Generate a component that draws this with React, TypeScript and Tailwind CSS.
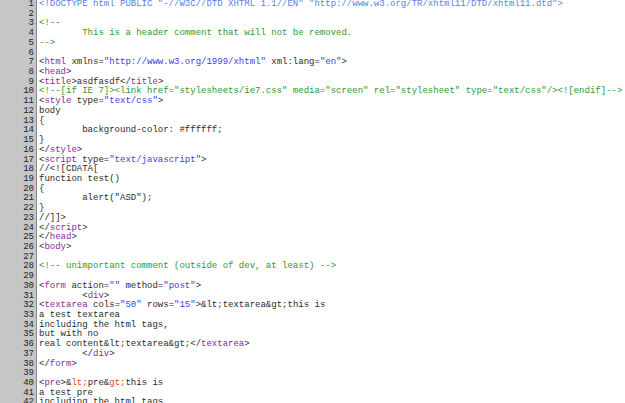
type Seg = [string, string];

const C: Record<string, string> = {
  p: "text-[#2b2b2b]",
  t: "text-[#8e1f99]",
  v: "text-[#3b3bf0]",
  c: "text-[#2e992e]",
  d: "text-[#5b7fe0]",
  e: "text-[#e6461d]",
};

const T = "        ";

const open = (name: string, rest: Seg[] = [], close = ">"): Seg[] => [
  ["p", "<"],
  ["t", name],
  ...rest,
  ["p", close],
];
const end = (name: string): Seg[] => [["p", "</"], ["t", name], ["p", ">"]];

const lines: Seg[][] = [
  [["d", '<!DOCTYPE html PUBLIC "-//W3C//DTD XHTML 1.1//EN" "http://www.w3.org/TR/xhtml11/DTD/xhtml11.dtd">']],
  [],
  [["c", "<!--"]],
  [["c", T + "This is a header comment that will not be removed."]],
  [["c", "-->"]],
  [],
  open("html", [
    ["p", " xmlns="],
    ["v", '"http://www.w3.org/1999/xhtml"'],
    ["p", " xml:lang="],
    ["v", '"en"'],
  ]),
  open("head"),
  [...open("title"), ["p", "asdfasdf"], ...end("title")],
  [["c", '<!--[if IE 7]><link href="stylesheets/ie7.css" media="screen" rel="stylesheet" type="text/css"/><![endif]-->']],
  open("style", [["p", " type="], ["v", '"text/css"']]),
  [["p", "body"]],
  [["p", "{"]],
  [["p", T + "background-color: #ffffff;"]],
  [["p", "}"]],
  end("style"),
  open("script", [["p", " type="], ["v", '"text/javascript"']]),
  [["p", "//<![CDATA["]],
  [["p", "function test()"]],
  [["p", "{"]],
  [["p", T + 'alert("ASD");']],
  [["p", "}"]],
  [["p", "//]]>"]],
  end("script"),
  end("head"),
  open("body"),
  [],
  [["c", "<!-- unimportant comment (outside of dev, at least) -->"]],
  [],
  open("form", [
    ["p", " action="],
    ["v", '""'],
    ["p", " method="],
    ["v", '"post"'],
  ]),
  [["p", T], ...open("div")],
  [
    ...open("textarea", [
      ["p", " cols="],
      ["v", '"50"'],
      ["p", " rows="],
      ["v", '"15"'],
    ]),
    ["p", "&lt;textarea&gt;this is"],
  ],
  [["p", "a test textarea"]],
  [["p", "including the html tags,"]],
  [["p", "but with no"]],
  [["p", "real content&lt;textarea&gt;"], ...end("textarea")],
  [["p", T], ...end("div")],
  end("form"),
  [],
  [
    ...open("pre"),
    ["p", "&"],
    ["e", "lt;"],
    ["p", "pre&"],
    ["e", "gt;"],
    ["p", "this is"],
  ],
  [["p", "a test pre"]],
  [["p", "including the html tags"]],
];

export default function App() {
  return (
    <div className="h-[403px] w-[625px] overflow-hidden bg-white font-['Liberation_Mono',monospace] text-[9px] leading-[9.72px]">
      <div className="flex min-h-full">
        <div className="w-[37px] shrink-0 border-r border-[#8a8a8a] bg-[#c6c6c6] pr-[2px] text-right text-[#222]">
          {lines.map((_, i) => (
            <div key={i} className="h-[9.72px]">
              {i + 1}
            </div>
          ))}
        </div>
        <div className="flex-1 whitespace-pre pl-[2px]">
          {lines.map((segs, i) => (
            <div key={i} className="h-[9.72px]">
              {segs.map(([k, s], j) => (
                <span key={j} className={C[k]}>
                  {s}
                </span>
              ))}
            </div>
          ))}
        </div>
      </div>
    </div>
  );
}
